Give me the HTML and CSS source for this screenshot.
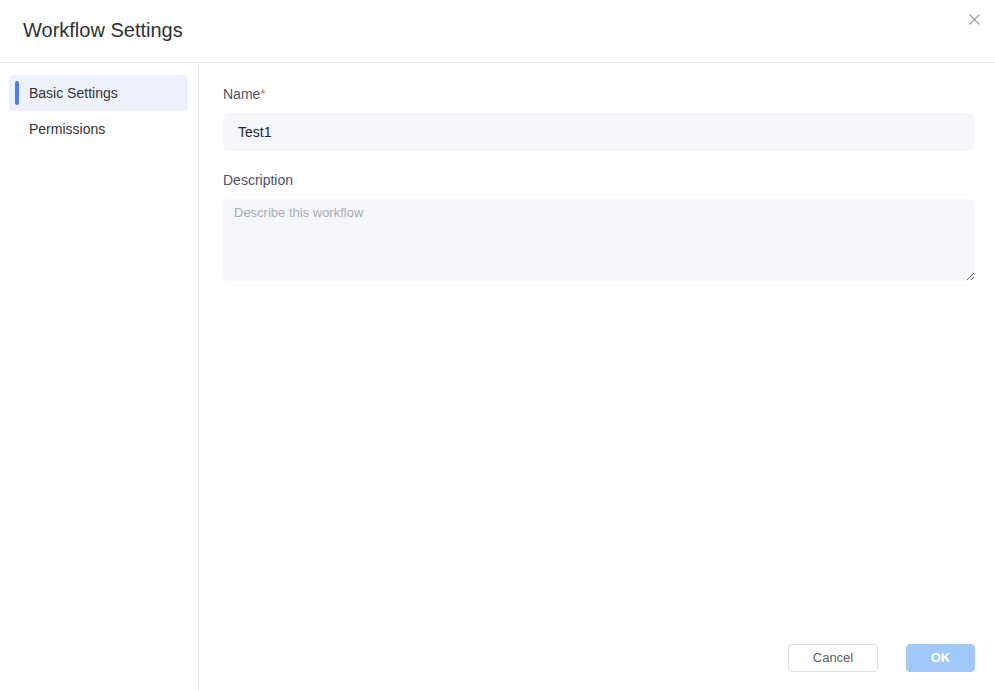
FILE: index.html
```html
<!DOCTYPE html>
<html>
<head>
<meta charset="UTF-8">
<title>Workflow Settings</title>
<link rel="stylesheet" href="styles.css">
</head>
<body>

<div class="dialog">

	<!-- 헤더 -->
	<div class="dialogHeader">
		<span class="dialogTitle">Workflow Settings</span>
		<span class="closeBtn">
			<svg width="11" height="11" viewBox="0 0 11 11">
				<path d="M0.5 0.5 L10.5 10.5 M10.5 0.5 L0.5 10.5" stroke="#9a9a9a" stroke-width="1.1" fill="none"/>
			</svg>
		</span>
	</div>

	<div class="dialogBody">

		<!-- 좌측 메뉴 -->
		<div class="sideMenu">
			<div class="menuItem selectedItem">Basic Settings</div>
			<div class="menuItem">Permissions</div>
		</div>

		<!-- 설정 폼 -->
		<div class="formArea">
			<div class="formField">
				<label class="fieldLabel">Name<span class="required">*</span></label>
				<input class="textInput" type="text" value="Test1" />
			</div>
			<div class="formField">
				<label class="fieldLabel">Description</label>
				<textarea class="textArea" placeholder="Describe this workflow"></textarea>
			</div>

			<div class="formFooter">
				<button class="btn cancelBtn">Cancel</button>
				<button class="btn okBtn" disabled>OK</button>
			</div>
		</div>

	</div>
</div>

</body>
</html>
```

FILE: styles.css
```css
/* 기본 스타일 */
html, body {
	width: 100%;
	height: 100%;
	margin: 0;
	padding: 0;
	font-family: "Liberation Sans", Arial, sans-serif;
	background: #fff;
}

.dialog {
	display: flex;
	flex-direction: column;
	height: 100%;
}

/* 헤더 */
.dialogHeader {
	display: flex;
	justify-content: space-between;
	height: 62px;
	border-bottom: 1px solid #e4e6eb;
	padding: 0 15px 0 23px;
	box-sizing: content-box;
}
.dialogTitle {
	font-size: 20px;
	color: #303133;
	line-height: 20px;
	padding-top: 20px;
}
.closeBtn {
	padding-top: 11px;
	cursor: pointer;
}

/* 본문 */
.dialogBody {
	flex: 1;
	display: flex;
}

.sideMenu {
	width: 179px;
	padding: 12px 10px 0 9px;
	border-right: 1px solid #e4e6eb;
}
.menuItem {
	position: relative;
	height: 36px;
	line-height: 36px;
	padding-left: 20px;
	font-size: 14px;
	color: #333;
	border-radius: 4px;
	cursor: pointer;
}
.selectedItem {
	background: #edf1fc;
}
.selectedItem::before {
	content: "";
	position: absolute;
	left: 6px;
	top: 6px;
	width: 4px;
	height: 24px;
	border-radius: 2px;
	background: #4d7cf0;
}

/* 폼 */
.formArea {
	flex: 1;
	display: flex;
	flex-direction: column;
	padding: 21px 20px 18px 24px;
}
.formField {
	display: flex;
	flex-direction: column;
	margin-bottom: 19px;
}
.fieldLabel {
	font-size: 14px;
	line-height: 20px;
	color: #4c5264;
	margin-bottom: 9px;
}
.required {
	color: #f56c6c;
}
.textInput {
	height: 38px;
	border: none;
	border-radius: 6px;
	background: #f5f6fa;
	padding: 0 15px;
	font-family: "Liberation Sans", Arial, sans-serif;
	font-size: 14px;
	color: #1c2338;
	outline: none;
}
.textArea {
	height: 82px;
	box-sizing: border-box;
	border: none;
	border-radius: 6px;
	background: #f5f6fa;
	padding: 5px 11px;
	font-family: "Liberation Sans", Arial, sans-serif;
	font-size: 13px;
	line-height: 18px;
	color: #1c2338;
	outline: none;
	resize: vertical;
}
.textArea::placeholder {
	color: #a9acb4;
}

.formFooter {
	margin-top: auto;
	display: flex;
	justify-content: flex-end;
	gap: 28px;
}
.btn {
	height: 28px;
	border-radius: 4px;
	font-family: "Liberation Sans", Arial, sans-serif;
	font-size: 13px;
	line-height: 14px;
	padding-bottom: 2px;
	cursor: pointer;
}
.cancelBtn {
	width: 90px;
	background: #fff;
	border: 1px solid #dcdfe6;
	color: #606266;
}
.okBtn {
	width: 69px;
	background: #a0c8fb;
	border: 1px solid #a0c8fb;
	color: #fff;
	font-weight: bold;
}
```
